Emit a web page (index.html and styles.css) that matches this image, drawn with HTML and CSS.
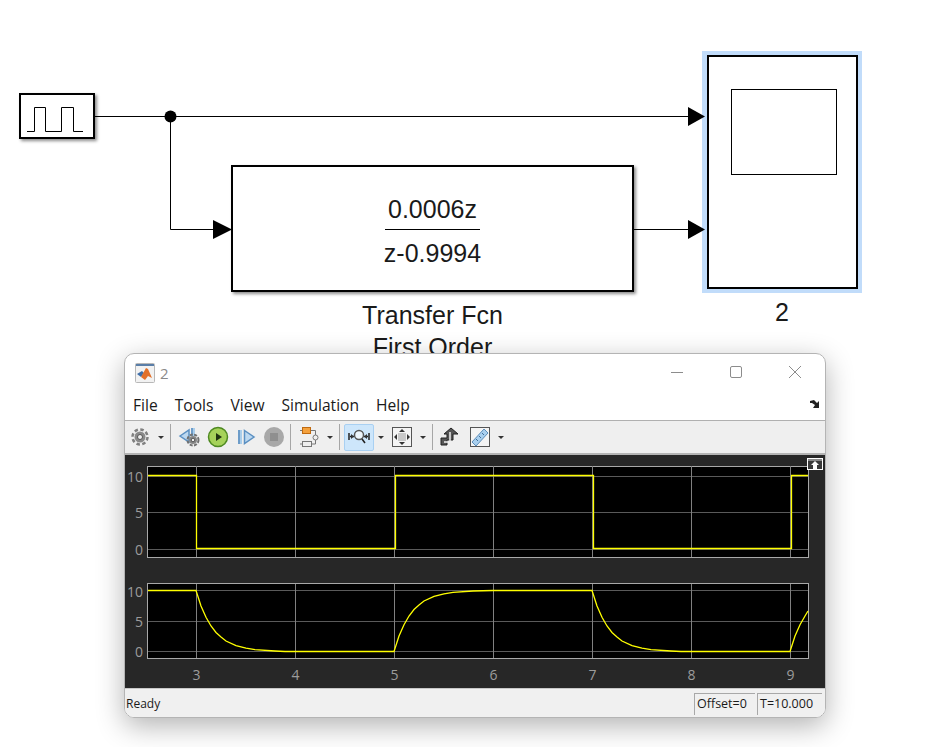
FILE: index.html
```html
<!DOCTYPE html>
<html lang="en">
<head>
    <meta charset="UTF-8">
    <meta name="viewport" content="width=device-width, initial-scale=1.0">
    <title>Simulink model with scope</title>
    <link rel="stylesheet" href="styles.css">
</head>
<body>

<!-- model canvas -->
<div class="canvas">
    <div class="block pulse-block"></div>

    <div class="block tf-block">
        <div class="tf-num">0.0006z</div>
        <div class="tf-bar"></div>
        <div class="tf-den">z-0.9994</div>
    </div>
    <div class="block-label tf-label">Transfer Fcn<br>First Order</div>

    <div class="selected">
        <div class="block scope-block">
            <div class="scope-screen"></div>
        </div>
    </div>
    <div class="block-label scope-label">2</div>

    <svg class="wires" width="927" height="354" viewBox="0 0 927 354">
        <polyline class="wire" points="27,131.5 34.5,131.5 34.5,107.5 45.5,107.5 45.5,131.5 61.5,131.5 61.5,107.5 73.5,107.5 73.5,131.5 83,131.5"/>
        <line class="wire" x1="95" y1="116.5" x2="690" y2="116.5"/>
        <polyline class="wire" points="170.5,116 170.5,229.5 215,229.5"/>
        <line class="wire" x1="633" y1="229.5" x2="690" y2="229.5"/>
        <circle class="dot" cx="170.5" cy="116.5" r="6"/>
        <polygon class="dot" points="688,107 705,116.5 688,126"/>
        <polygon class="dot" points="213,220 232,229.5 213,239"/>
        <polygon class="dot" points="688,220 705,229.5 688,239"/>
    </svg>
</div>

<!-- scope window -->
<div class="window">
    <div class="titlebar">
        <svg class="app-icon" width="20" height="20" viewBox="0 0 20 20">
            <rect class="app-frame" x="0.5" y="0.5" width="19" height="19" rx="1"/>
            <rect class="app-top" x="1" y="1" width="18" height="2"/>
            <polygon class="logo-blue" points="2,11 7,8 9,10 6,14"/>
            <polygon class="logo-orange" points="6,14 11,5 13,6 17,15 13,13 10,17"/>
        </svg>
        <span class="win-title">2</span>
        <div class="win-controls">
            <svg width="14" height="14" viewBox="0 0 14 14"><line class="ctl" x1="1" y1="7.5" x2="13" y2="7.5"/></svg>
            <svg width="14" height="14" viewBox="0 0 14 14"><rect class="ctl" x="1.5" y="1.5" width="11" height="11" rx="1.5"/></svg>
            <svg width="14" height="14" viewBox="0 0 14 14"><path class="ctl" d="M1 1 L13 13 M13 1 L1 13"/></svg>
        </div>
    </div>

    <div class="menubar">
        <span>File</span>
        <span>Tools</span>
        <span>View</span>
        <span>Simulation</span>
        <span>Help</span>
        <svg class="dock-arrow" width="10" height="10" viewBox="0 0 10 10">
            <polygon class="dock-path" points="0,1 4,0 7,3 9,1 9,8 3,8 5,5 2,3 0,3"/>
        </svg>
    </div>

    <div class="toolbar">
        <div class="tool">
            <svg width="20" height="20" viewBox="0 0 20 20">
                <circle class="gear-teeth" cx="10" cy="10" r="7.5"/>
                <circle class="gear-body" cx="10" cy="10" r="5.5"/>
                <circle class="gear-hole" cx="10" cy="10" r="2.5"/>
            </svg>
        </div>
        <div class="caret"></div>
        <div class="sep"></div>

        <div class="tool tool-first">
            <svg width="24" height="22" viewBox="0 0 24 22">
                <polygon class="step-mark" points="2,10 11,4 11,16"/>
                <rect class="blue-fill" x="13" y="2" width="2" height="8"/>
                <rect class="blue-light" x="15" y="2" width="2" height="8"/>
                <circle class="gear-teeth-small" cx="15" cy="14" r="5.5"/>
                <circle class="gear-body-small" cx="15" cy="14" r="4"/>
                <circle class="gear-hole" cx="15" cy="14" r="1.8"/>
            </svg>
        </div>
        <div class="tool">
            <svg width="22" height="22" viewBox="0 0 22 22">
                <circle class="play-ring" cx="11" cy="11" r="9.5"/>
                <polygon class="play-mark" points="9,7 15,11 9,15"/>
            </svg>
        </div>
        <div class="tool">
            <svg width="20" height="20" viewBox="0 0 20 20">
                <rect class="blue-fill" x="2" y="3" width="2" height="14"/>
                <rect class="blue-light" x="4" y="3" width="2" height="14"/>
                <polygon class="step-mark" points="8.5,3.5 18,10 8.5,16.5"/>
            </svg>
        </div>
        <div class="tool">
            <svg width="22" height="22" viewBox="0 0 22 22">
                <circle class="stop-ring" cx="11" cy="11" r="10"/>
                <rect class="stop-mark" x="7" y="7" width="8" height="8"/>
            </svg>
        </div>
        <div class="sep"></div>

        <div class="tool tool-blocks">
            <svg width="22" height="22" viewBox="0 0 22 22">
                <rect class="block-orange" x="4.5" y="1.5" width="8" height="6"/>
                <rect class="block-grey" x="4.5" y="15.5" width="9" height="5"/>
                <path class="block-wire" d="M2 4.5 H4 M13 4.5 H17.5 V9 M17.5 14 V18 H14 M2 18 H4"/>
                <circle class="block-node" cx="17.5" cy="11.5" r="2.5"/>
            </svg>
        </div>
        <div class="caret"></div>
        <div class="sep"></div>

        <div class="tool tool-active">
            <svg width="22" height="18" viewBox="0 0 22 18">
                <path class="zoom-bars" d="M1 5 V12 M21 5 V12 M2 8.5 H6 M16 8.5 H20"/>
                <polygon class="dark-fill" points="3,6 6,8.5 3,11"/>
                <polygon class="dark-fill" points="19,6 16,8.5 19,11"/>
                <circle class="zoom-lens" cx="11" cy="7" r="4.5"/>
                <line class="zoom-bars" x1="14" y1="11" x2="17" y2="15"/>
            </svg>
        </div>
        <div class="caret"></div>

        <div class="tool tool-fit">
            <svg width="20" height="20" viewBox="0 0 20 20">
                <rect class="fit-frame" x="0.5" y="0.5" width="19" height="19"/>
                <rect class="fit-mid" x="6" y="6" width="8" height="8"/>
                <polygon class="dark-fill" points="10,2 13,5 7,5"/>
                <polygon class="dark-fill" points="10,18 13,15 7,15"/>
                <polygon class="dark-fill" points="2,10 5,7 5,13"/>
                <polygon class="dark-fill" points="18,10 15,7 15,13"/>
            </svg>
        </div>
        <div class="caret"></div>
        <div class="sep"></div>

        <div class="tool tool-last">
            <svg width="20" height="20" viewBox="0 0 20 20">
                <path class="cursor-fill" d="M1 18 V11 H7 V7 H4 L11 1 L18 7 H13 V13 H7 V18 Z"/>
                <path class="cursor-line" d="M4 15 H10 V5"/>
            </svg>
        </div>
        <div class="tool">
            <svg width="22" height="22" viewBox="0 0 22 22">
                <rect class="fit-frame" x="1.5" y="1.5" width="19" height="19"/>
                <polygon class="ruler" points="3,16 15,3 19,7 7,20"/>
                <path class="ruler-marks" d="M7 13 L9 15 M10 10 L12 12 M13 7 L15 9"/>
            </svg>
        </div>
        <div class="caret"></div>
    </div>

    <div class="scope-area">
        <svg class="plots" width="700" height="233" viewBox="125 455 700 233">
            <!-- top axes -->
            <rect class="axes" x="147.5" y="466.5" width="661" height="91"/>
            <path class="grid-h" d="M148 476.5 H808 M148 512.5 H808 M148 549.5 H808"/>
            <path class="grid-v" d="M196.5 466 V557 M295.5 466 V557 M394.5 466 V557 M493.5 466 V557 M592.5 466 V557 M691.5 466 V557 M790.5 466 V557"/>
            <polyline class="signal" points="148,475.5 196.5,475.5 196.5,548.5 395.5,548.5 395.5,475.5 593.5,475.5 593.5,548.5 791.5,548.5 791.5,475.5 808,475.5"/>
            <text class="tick-y" x="143" y="482">10</text>
            <text class="tick-y" x="143" y="518">5</text>
            <text class="tick-y" x="143" y="555">0</text>

            <!-- bottom axes -->
            <rect class="axes" x="147.5" y="583.5" width="661" height="75"/>
            <path class="grid-h" d="M148 590.5 H808 M148 621.5 H808 M148 651.5 H808"/>
            <path class="grid-v" d="M196.5 584 V658 M295.5 584 V658 M394.5 584 V658 M493.5 584 V658 M592.5 584 V658 M691.5 584 V658 M790.5 584 V658"/>
            <polyline class="signal" points="148,590.5 196,590.5 201,606 206,617.3 211,626 216,632.5 221,637 226,641 236,645.7 246,648.2 255,649.7 275,651 285,651.5 394,651.5 399,636 404,624.7 409,616 414,609.5 419,605 424,601 434,596.3 444,593.8 453,592.3 473,591 493,590.5 592,590.5 597,606 602,617.3 607,626 612,632.5 617,637 622,641 632,645.7 642,648.2 651,649.7 671,651 681,651.5 790,651.5 795,636 800,624.7 805,616 808,611"/>
            <text class="tick-y" x="143" y="597">10</text>
            <text class="tick-y" x="143" y="627">5</text>
            <text class="tick-y" x="143" y="657">0</text>

            <text class="tick-x" x="196.5" y="680">3</text>
            <text class="tick-x" x="295.5" y="680">4</text>
            <text class="tick-x" x="394.5" y="680">5</text>
            <text class="tick-x" x="493.5" y="680">6</text>
            <text class="tick-x" x="592.5" y="680">7</text>
            <text class="tick-x" x="691.5" y="680">8</text>
            <text class="tick-x" x="790.5" y="680">9</text>
        </svg>
        <div class="undock-btn">
            <svg width="14" height="10" viewBox="0 0 14 10">
                <rect class="undock-bar" x="0" y="0" width="14" height="2"/>
                <path class="undock-arrow" d="M7 2 L11 6 H9 V10 H5 V6 H3 Z"/>
            </svg>
        </div>
    </div>

    <div class="statusbar">
        <span class="status-text">Ready</span>
        <span class="status-box offset-box">Offset=0</span>
        <span class="status-box time-box">T=10.000</span>
    </div>
</div>

</body>
</html>
```

FILE: styles.css
```css
body {
    margin: 0;
    width: 927px;
    height: 747px;
    position: relative;
    overflow: hidden;
    background-color: white;
    font-family: "Liberation Sans", Arial, sans-serif;
}

/* model canvas */

.canvas {
    position: absolute;
    top: 0;
    left: 0;
    width: 927px;
    height: 747px;
}

.wires {
    position: absolute;
    top: 0;
    left: 0;
}

.wire {
    fill: none;
    stroke: black;
    stroke-width: 1;
}

.dot {
    fill: black;
}

.block {
    box-sizing: border-box;
    background: white;
    border: 2px solid black;
    box-shadow: 2px 2px 3px rgba(0, 0, 0, 0.45);
}

.pulse-block {
    position: absolute;
    left: 19px;
    top: 93px;
    width: 76px;
    height: 46px;
}

.tf-block {
    position: absolute;
    left: 231px;
    top: 165px;
    width: 403px;
    height: 127px;
    display: flex;
    flex-direction: column;
    align-items: center;
    color: #1a1a1a;
    font-size: 25px;
}

.tf-num {
    margin-top: 28px;
    line-height: 28px;
}

.tf-bar {
    width: 95px;
    height: 1px;
    margin-top: 6px;
    background: black;
}

.tf-den {
    margin-top: 9px;
    line-height: 28px;
}

.block-label {
    position: absolute;
    text-align: center;
    color: #1a1a1a;
    font-size: 25px;
    line-height: 32px;
}

.tf-label {
    left: 232px;
    top: 299px;
    width: 401px;
}

.scope-label {
    left: 702px;
    top: 296px;
    width: 160px;
}

.selected {
    position: absolute;
    left: 702px;
    top: 51px;
    width: 160px;
    height: 242px;
    box-sizing: border-box;
    padding: 4px 4px 4px 5px;
    display: flex;
    background: #c1dcfa;
}

.scope-block {
    flex: 1;
    box-shadow: none;
    position: relative;
    padding: 32px 19px 0 22px;
}

.scope-screen {
    box-sizing: border-box;
    height: 86px;
    border: 1px solid black;
}

/* scope window */

.window {
    position: absolute;
    left: 124px;
    top: 353px;
    width: 702px;
    height: 365px;
    box-sizing: border-box;
    display: flex;
    flex-direction: column;
    overflow: hidden;
    background: white;
    border: 1px solid #b4b4b4;
    border-radius: 10px;
}

.canvas::after {
    content: "";
    position: absolute;
    left: 124px;
    top: 353px;
    width: 702px;
    height: 365px;
    border-radius: 10px;
    box-shadow: 0 8px 28px rgba(0, 0, 0, 0.3);
}

.titlebar {
    height: 39px;
    display: flex;
    align-items: center;
    padding-left: 10px;
}

.app-icon {
    margin-top: -1px;
}

.app-frame {
    fill: #f2f2f2;
    stroke: #b8b8b8;
}

.app-top {
    fill: #5a7ea8;
}

.logo-blue {
    fill: #3f6ea8;
}

.logo-orange {
    fill: #e2702a;
}

.win-title {
    margin-left: 5px;
    margin-top: -1px;
    color: #8a8a8a;
    font-family: "Open Sans", sans-serif;
    font-size: 15px;
}

.win-controls {
    margin-left: auto;
    display: flex;
    gap: 45px;
    margin-right: 23px;
    margin-top: -4px;
}

.ctl {
    fill: none;
    stroke: #8c8c8c;
    stroke-width: 1;
}

.menubar {
    height: 28px;
    display: flex;
    align-items: center;
    gap: 17px;
    padding-left: 8px;
    padding-bottom: 4px;
    box-sizing: border-box;
    font-family: "Open Sans", sans-serif;
    font-size: 15.6px;
    color: #1a1a1a;
    border-bottom: 1px solid #b0b0b0;
}

.dock-arrow {
    margin-left: auto;
    margin-right: 5px;
}

.dock-path {
    fill: #222;
}

.toolbar {
    height: 34px;
    box-sizing: border-box;
    display: flex;
    align-items: center;
    padding-left: 1px;
    background: #efefef;
    border-bottom: 2px solid #b4b4b4;
}

.tool {
    width: 28px;
    height: 27px;
    display: flex;
    align-items: center;
    justify-content: center;
    flex-shrink: 0;
}

.tool-first {
    margin-left: 4px;
}

.tool-blocks {
    margin-left: 3px;
}

.tool-active {
    width: 30px;
    box-sizing: border-box;
    margin-left: 3px;
    background: #cde6fb;
    border: 1px solid #a9d0f2;
    border-radius: 2px;
}

.tool-last {
    margin-left: 2px;
    margin-right: 2px;
}

.caret {
    width: 14px;
    display: flex;
    justify-content: center;
    flex-shrink: 0;
}

.caret::before {
    content: "";
    border-left: 3px solid transparent;
    border-right: 3px solid transparent;
    border-top: 3px solid #333;
}

.sep {
    width: 1px;
    height: 26px;
    margin: 0 1px 0 2px;
    background: #a6a6a6;
    flex-shrink: 0;
}

.gear-teeth {
    fill: none;
    stroke: #808080;
    stroke-width: 2.5;
    stroke-dasharray: 3.5 2.4;
}

.gear-body {
    fill: #8a8a8a;
}

.gear-teeth-small {
    fill: none;
    stroke: #707070;
    stroke-width: 2;
    stroke-dasharray: 3 1.4;
}

.gear-body-small {
    fill: #888;
}

.gear-hole {
    fill: #efefef;
    stroke: #555;
    stroke-width: 1;
}

.blue-fill {
    fill: #6d9cc9;
}

.blue-light {
    fill: #a9cdea;
}

.step-mark {
    fill: #bcd8f0;
    stroke: #5b90c2;
    stroke-width: 1.5;
}

.play-ring {
    fill: #a6d25a;
    stroke: #4f8a22;
    stroke-width: 1.5;
}

.play-mark {
    fill: #1f3310;
}

.stop-ring {
    fill: #a8a8a8;
}

.stop-mark {
    fill: #8f8f8f;
}

.block-orange {
    fill: #f4a13c;
    stroke: #c06a10;
}

.block-grey {
    fill: #efefef;
    stroke: #777;
}

.block-wire {
    fill: none;
    stroke: #777;
}

.block-node {
    fill: #efefef;
    stroke: #777;
}

.zoom-bars {
    fill: none;
    stroke: #222;
    stroke-width: 1.5;
}

.zoom-lens {
    fill: #eef6fc;
    stroke: #555;
    stroke-width: 1.5;
}

.dark-fill {
    fill: #333;
}

.fit-frame {
    fill: #f4f4f4;
    stroke: #555;
}

.fit-mid {
    fill: #c8c8c8;
}

.cursor-fill {
    fill: #555;
    stroke: #222;
}

.cursor-line {
    fill: none;
    stroke: #efefef;
    stroke-width: 1.5;
}

.ruler {
    fill: #a9cfee;
    stroke: #5c8db8;
}

.ruler-marks {
    fill: none;
    stroke: #3f6f99;
}

.scope-area {
    height: 233px;
    position: relative;
    background: #272727;
}

.plots {
    display: block;
}

.axes {
    fill: black;
    stroke: #a8a8a8;
}

.grid-h {
    fill: none;
    stroke: #5a5a5a;
}

.grid-v {
    fill: none;
    stroke: #808080;
}

.signal {
    fill: none;
    stroke: #ffff00;
    stroke-width: 1.3;
}

.tick-y,
.tick-x {
    fill: #9c9c9c;
    font-family: "Open Sans", sans-serif;
    font-size: 14px;
}

.tick-y {
    text-anchor: end;
}

.tick-x {
    text-anchor: middle;
}

.undock-btn {
    position: absolute;
    right: 2px;
    top: 3px;
    width: 14px;
    height: 10px;
    padding: 0;
    border: 1px solid white;
    display: flex;
    background: #3a3a3a;
}

.undock-bar {
    fill: #888;
}

.undock-arrow {
    fill: white;
}

.statusbar {
    flex: 1;
    display: flex;
    align-items: center;
    padding-left: 1px;
    padding-right: 3px;
    padding-top: 1px;
    background: #f0f0f0;
    border-top: 1px solid #c8c8c8;
    font-family: "Open Sans", sans-serif;
    font-size: 12px;
    color: #1a1a1a;
}

.status-text {
    margin-right: auto;
}

.status-box {
    box-sizing: border-box;
    height: 22px;
    margin-top: 1px;
    padding-left: 2px;
    line-height: 20px;
    font-size: 12.5px;
    border-left: 1px solid #a8a8a8;
    border-top: 1px solid #a8a8a8;
}

.offset-box {
    width: 61px;
    margin-right: 2px;
}

.time-box {
    width: 65px;
}
```
